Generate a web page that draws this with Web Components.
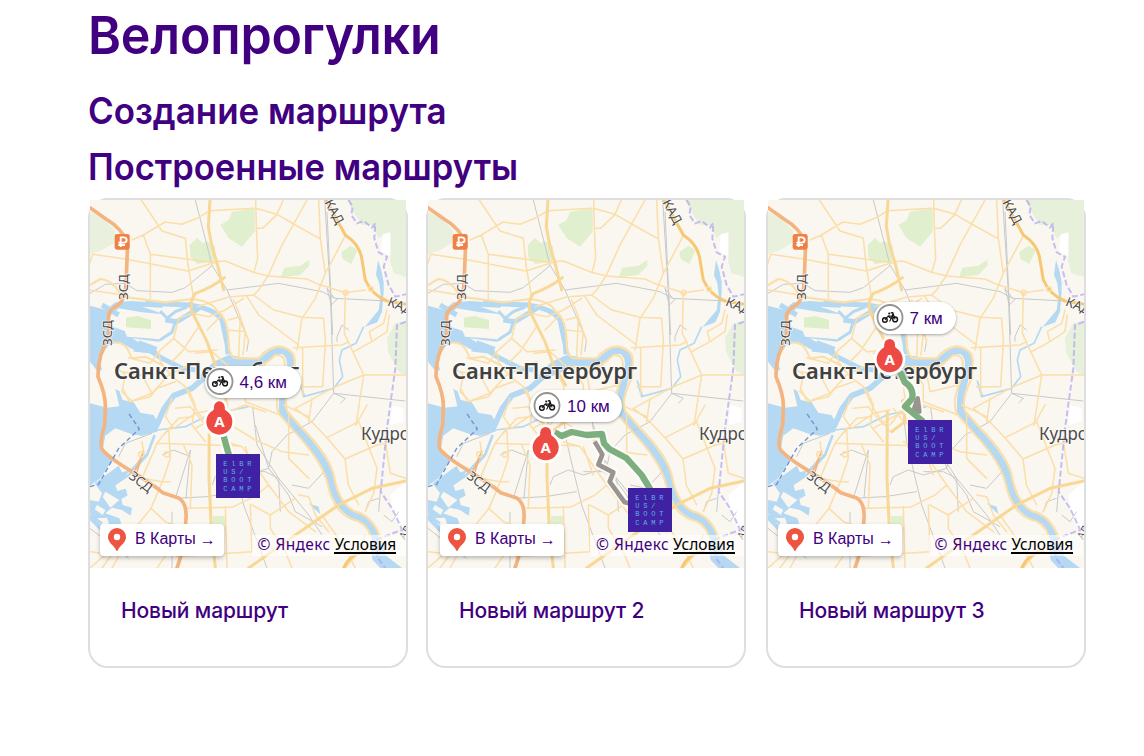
<!DOCTYPE html>
<html lang="ru">
<head>
<meta charset="utf-8">
<title>Велопрогулки</title>
<style>
body{margin:0;background:#fff;color:#41007f;font-family:Inter,"Liberation Sans",sans-serif}
</style>
</head>
<body>
<bike-page>
  <span slot="title">Велопрогулки</span>
  <span slot="create">Создание маршрута</span>
  <span slot="built">Построенные маршруты</span>
  <route-card>
    <city-map slot="map" pin="412 680" logo="402 777" route="M425 724L442 785" button="10" credit="161.5" pill="115 166 96 .5" distance="4,6 км"></city-map>
    Новый маршрут
  </route-card>
  <route-card>
    <city-map slot="map" pin="377 757" logo="624 879" route="M404 712L425 723L455 711L500 720L546 717L552 745L568 762L620 790L665 840L692 885" alt="M524 740L547 778L535 809L580 832L569 860L614 922L632 926" button="12" credit="162" pill="102 190 92 3" distance="10 км"></city-map>
    Новый маршрут 2
  </route-card>
  <route-card>
    <city-map slot="map" pin="389 493" logo="444 675" route="M420 530L434 562Q461 577 457 610L435 635L490 680" alt="M463 640L473 610L478 650Z" button="10" credit="160.5" pill="106 102 82 1.5" distance="7 км"></city-map>
    Новый маршрут 3
  </route-card>
</bike-page>
<script>
const land = `
<rect x="24" y="15" width="948" height="1104" fill="#faf7f1"/>
<g fill="#e0efcd">
 <path fill="#e9f1de" d="M24 50L70 75L100 108L95 145L60 165L24 178Z"/>
 <path fill="#e6f0da" d="M795 15H972V245L935 235L925 200L925 118L902 120L890 130L870 90L840 90L820 60Z"/>
 <path fill="#e6f0da" d="M972 380L940 385L915 430L918 470L950 530L972 540Z"/>
 <path d="M415 90L440 75L450 50L518 40V110L480 155L440 130ZM323 150L345 128L362 145L375 138L400 155L396 200L345 207L325 185ZM607 218L655 212L682 194V212L655 240L597 247ZM778 172L805 152L827 165L808 207L782 192ZM393 963H432V1005H393Z"/>
</g>
<path fill="#fff" d="M902 118L925 112V182L898 170ZM930 630L965 640V680L925 690ZM925 900L972 858V1020L935 970Z"/>`;
const water = `
<g fill="#b5d9f2">
 <path d="M24 332L72 345L100 322L150 318L200 322L250 325L240 338L180 335L210 345L245 358L180 352L110 340L85 362L84 392L128 408L135 425L200 430L245 434L230 440L150 430L170 442L220 458L230 480L205 464L150 462L112 440L80 450L52 490L60 525L46 528L24 500Z"/>
 <path d="M24 625L75 638L112 634L100 582L112 588L122 615L155 622L175 653L214 660L230 685L226 710L180 722L150 718L100 700L70 722L62 765L95 790L55 850L24 872Z"/>
 <path d="M38 865L110 812L120 832L142 826L128 850L100 870L106 888L135 880L140 900L118 912L122 930L150 938L146 962L120 945L90 938L70 955L112 970L118 985L85 1000L75 968L40 970L24 955V915L50 920L60 895ZM24 960L80 1010L65 1018L24 976Z"/>
 <path d="M888 195L899 230L905 262L905 290L900 350L886 382L848 396L890 345L896 300L892 265L882 240ZM680 925L710 935L715 958ZM395 500L440 480L530 494L530 515L460 512L400 525L350 545Z"/>
 <path d="M862 1040L905 1045L912 1082L960 1119H895L872 1095Z"/>
</g>
<g fill="none" stroke="#b5d9f2" stroke-linejoin="round">
 <path stroke-width="15" d="M190 325L320 330Q398 340 420 375L436 450L438 478M155 462L205 468L240 490L300 520L340 525M250 375L285 380L350 340L318 328M60 330L110 360"/>
 <path stroke-width="9" d="M235 348L255 370L280 350L315 336M280 380L270 412L235 434M170 440L225 460"/>
 <path stroke-width="22" d="M400 515L445 496L535 504Q575 462 605 466Q635 485 622 530Q596 600 603 652L650 708Q735 795 748 860Q765 935 815 960Q855 972 875 1010L888 1065"/>
 <path stroke-width="17" d="M435 518L370 545L330 580L275 602L246 642L222 695L175 715"/>
 <path stroke-width="8" d="M218 720L195 780L140 840L95 870M190 780L150 825M24 960L60 985"/>
 <path stroke-width="5" d="M845 395L822 445L780 465L772 495L782 545L755 580L665 605L652 558L668 605M225 705L310 695L380 660L500 635"/>
</g>
<path fill="#faf7f1" d="M70 722L110 705L152 722L100 792L64 765ZM45 930L70 945L62 960L38 943ZM70 890L112 915L85 938L62 905ZM125 860L148 862L160 900L138 905Z"/>
<path fill="#dcefc8" d="M132 368L165 363L207 375V402L132 397Z"/>`;
const rails = `
<g fill="none" stroke="#c9c9c9" stroke-width="3" stroke-linejoin="round">
 <path d="M340 15L390 210L435 285L475 380L500 435L494 470M24 295L70 268L130 265L165 287L270 292L310 278L390 212M435 285L590 265L720 290L758 310L915 318M728 15L745 290L755 595M758 310L735 280L748 330L768 310M755 595L970 618M755 595L690 680L615 720L570 770M755 595L790 610L775 625"/>
 <path d="M425 615L440 740L485 930L555 1119M512 635L525 750L590 850L680 960L720 1020M520 690L560 820L620 900L640 950L720 995M570 770L560 820L490 840L445 825L400 845L390 870M630 870L680 880L740 815M280 910L325 765L312 910M280 910L375 905L470 890M270 950V1119M490 830L550 830L590 850L595 950"/>
 <path d="M210 715L130 745L110 785M24 1000L100 1060L140 1090M240 780L275 765L325 785M850 950L860 920L890 910M895 890L890 950M905 960L930 980L950 950M765 425L780 390L800 405M765 425V440M735 50L752 420"/>
</g>`;
const roads = `
<g fill="none" stroke="#fbdea8" stroke-width="4.6" stroke-linejoin="round" stroke-linecap="round">
 <path d="M178 15L240 108L310 130L318 210L335 310M24 203L32 178L130 192L318 228L404 200M150 135L184 120L249 81L300 88L345 70L384 47L515 40M184 120L205 178V310M205 178L400 203M24 285L120 300M400 200L430 198L514 232L560 243L675 252L710 268L790 293L850 285"/>
 <path d="M521 15L523 100L527 190L516 232M521 40L585 58L640 90L712 130M604 15L585 58L542 100L523 100M675 15L600 150L558 243L530 285L515 300L440 306L345 335M710 15L715 130L730 235L790 122M730 235L700 310L660 370L645 465M495 305L530 360L650 450M515 300L575 345L660 367L725 370L730 440L722 575L650 575M635 458L780 450L800 440M790 295L787 415L845 540L822 690M845 540H970M845 540L760 575L640 640M815 470L870 440L915 410L922 360M870 440L862 410L905 385L915 345M662 460V600"/>
 <path d="M330 355L290 370L275 430L230 470M275 430L320 470L405 465M330 355L380 365L430 345L485 310M350 395L300 470L270 500M375 405L420 360M230 470L205 505L140 488M340 475L390 470L440 515M440 405L490 410L483 480M438 375L475 365L470 485M455 315L475 365L500 440M230 470L235 500L270 545L310 575M100 515L130 540L120 590L150 618L210 595L260 540L300 520L350 500M210 595L180 540L120 530M400 515L430 570L437 630L390 690M310 575L340 640L390 710M555 500L500 535L510 590L595 570M460 520L490 570L490 620L595 660"/>
 <path d="M125 585L142 620L205 605L225 580L280 560M320 585L340 630L330 690L370 740M270 610L250 665L275 700L340 655L390 645M280 640L325 635L370 690M245 720L290 670L330 665M260 700L225 745L380 750L475 752M260 700L265 790L245 850L207 940L250 980L310 1000M305 750L330 810L325 940M225 745L180 850M400 640L430 680L520 735L600 770L680 780M340 700L400 665L490 630L550 650M180 740L185 775L165 810"/>
 <path d="M180 850L240 860L265 860M315 940L450 937L525 900L560 870L620 950L700 1010M560 870L480 755L430 740M207 940L150 1010L90 1119M265 1060L225 1119M430 935L435 1119M285 1085L390 1078L510 1070L505 930M120 1000L160 1040M24 1070L90 1078L60 1119M565 960L565 1000L610 1070L630 1119M650 900L680 905L700 960L740 1010M490 755L520 840M565 960L640 910M565 960L510 930"/>
 <path d="M640 640L679 670L735 728L789 792L799 870L830 930M735 728L830 680L885 820L875 895L850 950M789 792L885 750L930 740M822 690L855 630M910 740L925 835L972 850M680 680L690 610M620 660V790L680 850M605 630L680 665M720 960L790 1060L820 1119M24 1119L80 1070M790 1119L830 1070L850 1020"/>
 <path stroke-width="6.5" d="M24 270L55 252Q95 256 120 305L250 322L330 312Q393 319 406 350Q440 370 440 450Q444 490 465 490H530Q555 458 590 454Q640 462 638 500L635 550Q600 620 617 650L661 700Q750 790 758 855Q775 930 820 950Q865 960 890 1015L900 1045"/>
 <path stroke-width="6" d="M95 443Q130 440 143 475L150 490L190 485L240 510M445 515L535 520L580 480Q612 480 608 510L610 540Q570 620 592 658L639 712Q722 800 738 870Q755 950 810 973Q850 980 865 1020"/>
 <path stroke="#f9d795" stroke-width="9" d="M384 15L379 95Q387 150 404 200L425 285M427 248Q390 278 340 295Q322 320 330 350L375 440L400 510L437 570M382 650L381 850L388 1000L400 1119M500 1119L640 1020L770 930L870 880L972 858M430 615L435 680L395 710"/>
 <path stroke="#f7c772" stroke-width="9" d="M732 15L790 120Q835 150 840 195L850 255Q870 300 915 318L972 328M785 1119Q805 1075 850 1070"/>
 <circle cx="791" cy="293" r="7"/><circle cx="867" cy="282" r="7"/>
 <path stroke="#f3b480" stroke-width="11" d="M24 38L72 72Q120 100 137 145L132 270Q127 318 108 330Q70 350 82 380L80 430Q47 480 48 545Q72 600 70 640L68 690Q50 750 62 766Q90 795 150 830Q215 870 242 893L290 909Q315 925 312 970Q308 1060 285 1119"/>
 <path stroke="#f3b480" stroke-width="5" d="M160 825L185 770L180 780L165 830"/>
 <circle cx="178" cy="778" r="8"/><circle cx="255" cy="778" r="8"/>
</g>
<g fill="none" stroke="#a9a0f0" stroke-opacity=".65" stroke-width="6" stroke-dasharray="18 8">
 <path d="M800 15L812 35L808 60L825 85L845 78L870 98L880 85L877 130L890 172L915 185L905 215L920 270L940 305L972 298M972 380L945 390L940 520L915 700L896 890L930 940L968 1020M972 1000L880 1035L888 1090L910 1119"/>
</g>
<path d="M24 875L50 868L110 760L172 702L140 655" fill="none" stroke="#6b93d3" stroke-width="4" stroke-dasharray="14 9"/>`;
const labels = `
<g fill="#4b4b4b" stroke="#fff" stroke-opacity=".75" stroke-width="5" paint-order="stroke" font-family="Noto Sans,sans-serif" font-size="39">
 <text transform="translate(139 314) rotate(-90)" textLength="76" lengthAdjust="spacingAndGlyphs">ЗСД</text>
 <text transform="translate(90 452) rotate(-90)" textLength="76" lengthAdjust="spacingAndGlyphs">ЗСД</text>
 <text transform="translate(138 848) rotate(37)" textLength="76" lengthAdjust="spacingAndGlyphs">ЗСД</text>
 <text transform="translate(727 22) rotate(62)" textLength="77" lengthAdjust="spacingAndGlyphs">КАД</text>
 <text transform="translate(914 331) rotate(22)" textLength="77" lengthAdjust="spacingAndGlyphs">КАД</text>
 <text transform="translate(968 1035) rotate(-60)" font-size="30">АД</text>
 <text x="837" y="736" font-size="54" textLength="205" lengthAdjust="spacingAndGlyphs">Кудрово</text>
 <text x="96" y="552" font-size="63" font-weight="600" fill="#404040" textLength="555" lengthAdjust="spacingAndGlyphs">Санкт-Петербург</text>
</g>
<rect x="98" y="117" width="45" height="47" rx="7" fill="#ee8146"/>
<path d="M116 156V127H125Q134 127 134 135Q134 143 125 143H109M109 150H129" fill="none" stroke="#fff" stroke-width="5.5"/>`;

class BikePage extends HTMLElement{
  constructor(){
    super();
    this.attachShadow({mode:'open'}).innerHTML = `<style>
:host{display:block;box-sizing:border-box;height:756px;overflow:hidden;padding:4px 58px 0 88px}
h1,h2{margin:0;font-weight:600;white-space:nowrap;width:max-content;transform-origin:0 0}
h1{font-size:52.5px;line-height:63px;letter-spacing:-.2px;height:63px;transform:scaleX(.955)}
h2{font-size:37px;line-height:46px;height:46px}
.a{margin-top:21px;transform:scaleX(.944)}
.b{margin-top:10px;transform:scaleX(.933)}
.cards{display:grid;grid-template-columns:338px 340px 320px;margin-top:8px}
</style><h1><slot name="title"></slot></h1><h2 class="a"><slot name="create"></slot></h2><h2 class="b"><slot name="built"></slot></h2><div class="cards"><slot></slot></div>`;
  }
}
class RouteCard extends HTMLElement{
  constructor(){
    super();
    this.attachShadow({mode:'open'}).innerHTML = `<style>
:host{display:block;box-sizing:border-box;width:320px;height:470px;border:2px solid #dedede;border-radius:20px;background:#fff}
.t{padding:30px 31px;font-size:21px;line-height:26px;font-weight:500;letter-spacing:-.11px;white-space:nowrap}
</style><slot name="map"></slot><div class="t"><slot></slot></div>`;
  }
}
class MapPill extends HTMLElement{
  constructor(){
    super();
    this.attachShadow({mode:'open'}).innerHTML = `<style>
:host{display:flex;align-items:center;box-sizing:border-box;height:32px;border-radius:16px;background:#fff;box-shadow:0 1px 3px #0005;font:17px "Liberation Sans",Arial,sans-serif;white-space:nowrap}
svg{width:28px;height:28px;margin-right:6px;flex:none}
span{padding-top:1px}
</style><svg viewBox="0 0 28 28" fill="none" stroke="#111"><circle cx="14" cy="13.5" r="12.5" fill="#fff" stroke="#929292" stroke-width="1.8"/>
<g stroke-width="1.4"><circle cx="8.9" cy="16" r="2.3"/><circle cx="19.1" cy="15.4" r="2.4"/><path d="M8.9 16L12 12.2L15.3 14.5L13.5 17.5M12.3 11.7L16 12.3L17 9.8M19.1 15.4L16.8 8.6L14.7 8.9M15.2 14.6L17.2 11.4" stroke-width="1.1"/></g><circle cx="13.2" cy="9.6" r="1" fill="#111" stroke="none"/></svg><span><slot></slot></span>`;
  }
}
class CityMap extends HTMLElement{
  constructor(){super();this.attachShadow({mode:'open'});}
  connectedCallback(){
    const g=n=>this.getAttribute(n)||'';
    const [px,py,pw,pp]=g('pill').split(' ');
    const logo=['ElBR','US/','BOOT','CAMP'].map((r,j)=>[...r].map((c,i)=>`<text x="${28+i*24}" y="${35+j*25}">${c}</text>`).join('')).join('');
    this.shadowRoot.innerHTML = `<style>
:host{display:block;position:relative;width:316px;height:368px;overflow:hidden}
.map{display:block;width:316px;height:368px}
map-pill{position:absolute;left:${px}px;top:${py}px;width:${pw}px;padding-left:${pp}px}
.open{position:absolute;left:${g('button')}px;top:324px;width:124px;height:32px;box-sizing:border-box;padding-left:8px;display:flex;align-items:center;background:#fff;border-radius:4px;box-shadow:0 2px 4px #0004;font:16px/30px "Liberation Sans",Arial,sans-serif;white-space:nowrap}
.open svg{width:18px;height:24px;margin-right:9px}
.open span{position:relative;top:-1px}
.open .arrow{font-size:16px;margin-left:4px;top:0}
.credit{position:absolute;left:${g('credit')}px;top:335px;height:21px;width:154px;box-sizing:border-box;padding-left:6px;background:#fff9;font:15.5px/19px "Noto Sans",sans-serif;display:flex;white-space:nowrap}
.credit span{margin-right:5px}
.credit .y{letter-spacing:.35px;margin-right:4px}
.credit u{color:#000;text-decoration:none;border-bottom:2px solid #000;height:17px}
</style><svg class="map" viewBox="24 15 948 1104">${land}${water}${rails}${roads}${labels}
<g fill="none" stroke-linejoin="round"><path d="${g('alt')}" stroke="#fff" stroke-opacity=".75" stroke-width="26"/><path d="${g('route')}" stroke="#fff" stroke-opacity=".75" stroke-width="32"/><path d="${g('alt')}" stroke="#99948e" stroke-width="14"/><path d="${g('route')}" stroke="#7caf7d" stroke-width="19"/></g>
<g transform="translate(${g('pin')})"><path d="M0 -70V-80" stroke="#fff" stroke-width="7"/><g fill="#fff"><circle r="47"/><circle cy="-45" r="24"/></g><g fill="#ee4a44"><circle r="39"/><circle cy="-45" r="16"/><path d="M-16 -45Q-15 -34 -24 -28H24Q15 -34 16 -45Z"/></g><text y="17" text-anchor="middle" fill="#fff" font-family="Noto Sans,sans-serif" font-weight="700" font-size="45">A</text></g>
<g transform="translate(${g('logo')})" fill="#58b2e6" font-family="Liberation Mono,monospace" font-size="21" text-anchor="middle"><rect width="132" height="132" fill="#4121a3"/>${logo}</g></svg>
<div class="open"><svg viewBox="0 0 18 24"><path fill="#ee5540" fill-rule="evenodd" d="M9 0A9 9 0 0 0 0 9C0 15 6 17 8 22Q9 24 10 22C12 17 18 15 18 9A9 9 0 0 0 9 0ZM9 5.8A3.2 3.2 0 1 1 9 12.2A3.2 3.2 0 1 1 9 5.8Z"/></svg><span>В Карты</span><span class="arrow">→</span></div>
<div class="credit"><span>©</span><span class="y">Яндекс</span><u>Условия</u></div>
<map-pill>${g('distance')}</map-pill>`;
  }
}
customElements.define('map-pill',MapPill);
customElements.define('city-map',CityMap);
customElements.define('route-card',RouteCard);
customElements.define('bike-page',BikePage);
</script>
</body>
</html>
